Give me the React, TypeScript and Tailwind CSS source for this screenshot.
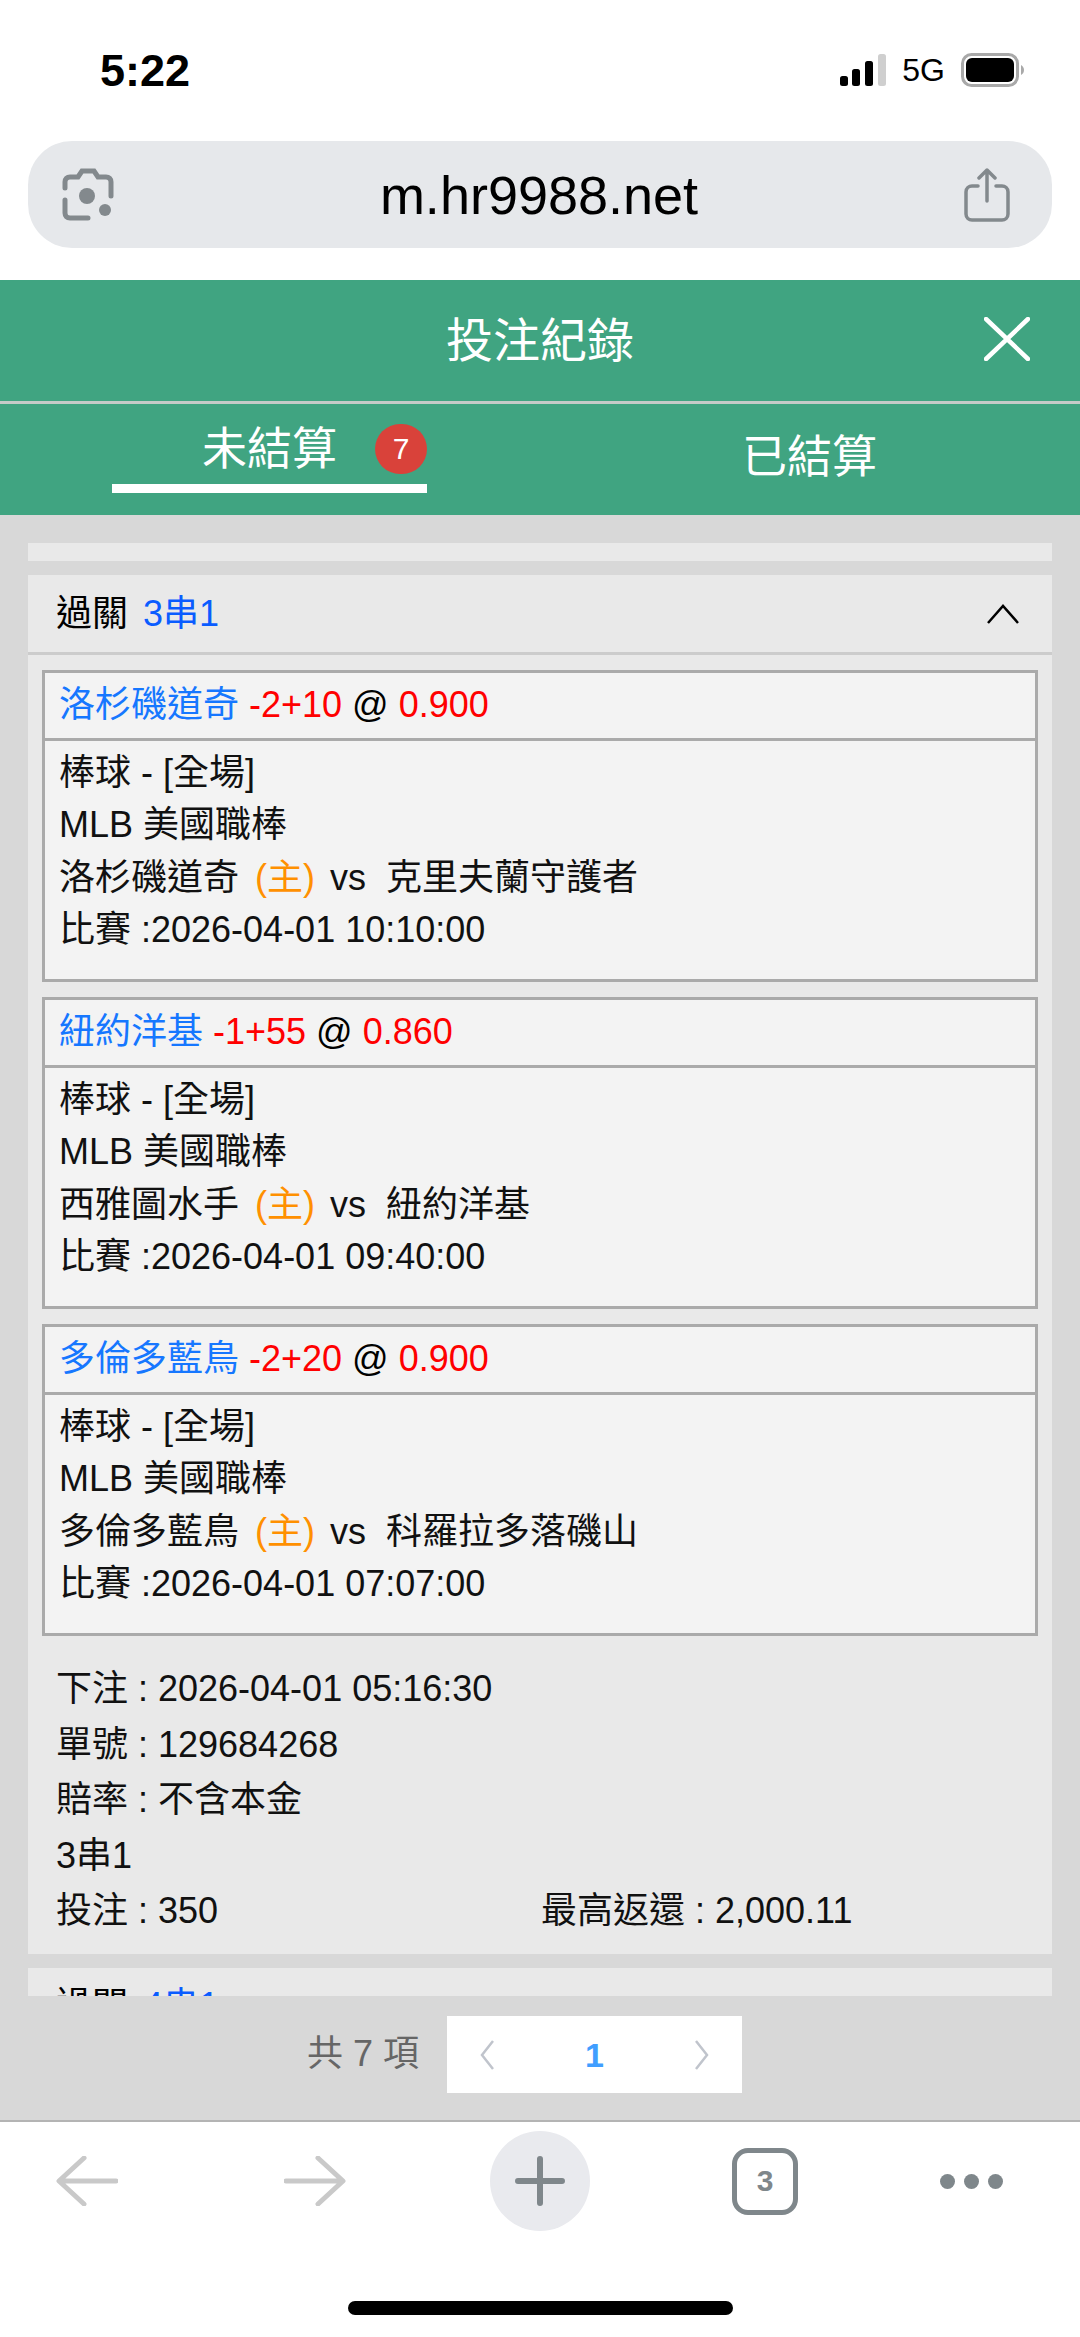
const cjk = { fontFamily: '"Liberation Sans", "Noto Sans CJK TC", sans-serif' };

const tickets = [
  { team: "洛杉磯道奇", line: "-2+10", odds: "0.900", home: "洛杉磯道奇", away: "克里夫蘭守護者", time: "2026-04-01 10:10:00" },
  { team: "紐約洋基", line: "-1+55", odds: "0.860", home: "西雅圖水手", away: "紐約洋基", time: "2026-04-01 09:40:00" },
  { team: "多倫多藍鳥", line: "-2+20", odds: "0.900", home: "多倫多藍鳥", away: "科羅拉多落磯山", time: "2026-04-01 07:07:00" },
];

function StatusBar() {
  return (
    <div className="flex h-[52px] items-center justify-between pl-[100px] pr-[56px]">
      <span className="text-[45px] font-bold leading-none text-black">5:22</span>
      <div className="flex items-center">
        <svg width="46" height="32" viewBox="0 0 46 32">
          <rect x="0" y="22" width="8" height="10" rx="2.5" fill="#000" />
          <rect x="12" y="15" width="8" height="17" rx="2.5" fill="#000" />
          <rect x="25" y="7" width="8" height="25" rx="2.5" fill="#000" />
          <rect x="38" y="0" width="8" height="32" rx="2.5" fill="#cfcfcf" />
        </svg>
        <span className="ml-[16px] text-[32px] leading-none text-black">5G</span>
        <svg className="ml-[16px]" width="63" height="34" viewBox="0 0 63 34">
          <rect x="1.5" y="1.5" width="55" height="31" rx="9" fill="none" stroke="#a9a9a9" strokeWidth="3" />
          <rect x="5" y="5" width="48" height="24" rx="6" fill="#000" />
          <path d="M60 12c2 1 3 3 3 5s-1 4-3 5z" fill="#a9a9a9" />
        </svg>
      </div>
    </div>
  );
}

function UrlBar() {
  return (
    <div className="mx-[28px] mt-[45px] flex h-[107px] items-center justify-between rounded-[44px] bg-[#e6e8eb] pl-[34px] pr-[42px]">
      <svg width="52" height="54" viewBox="0 0 52 54" fill="none" stroke="#83898d" strokeWidth="5" strokeLinecap="round">
        <path d="M3 20v-6c0-3 2-5 5-5h8l4-6h12l4 6h8c3 0 5 2 5 5v14" />
        <path d="M3 32v13c0 3 2 5 5 5h18" />
        <circle cx="25" cy="28" r="8" fill="#83898d" stroke="none" />
        <circle cx="43" cy="42" r="6" fill="#83898d" stroke="none" />
      </svg>
      <span className="text-[54px] leading-none text-black">m.hr9988.net</span>
      <svg width="46" height="54" viewBox="0 0 46 54" fill="none" stroke="#83898d" strokeWidth="3.5" strokeLinecap="round" strokeLinejoin="round">
        <path d="M14 18H8c-3 0-6 2-6 6v22c0 4 3 6 6 6h30c3 0 6-2 6-6V24c0-4-3-6-6-6h-6" />
        <path d="M23 33V2M15 10l8-8 8 8" />
      </svg>
    </div>
  );
}

function Ticket({ t }: { t: (typeof tickets)[number] }) {
  return (
    <div className="h-[312px] border-[3px] border-[#aaaaaa] bg-[#f3f3f3]">
      <div className="flex h-[68px] items-center border-b-[3px] border-[#aaaaaa] px-[14px] pb-[2px] text-[36px] leading-none">
        <span className="text-[#1677ff]">{t.team}</span>
        <span className="ml-[10px] text-[#ff0000]">{t.line}</span>
        <span className="ml-[10px] text-black">@</span>
        <span className="ml-[10px] text-[#ff0000]">{t.odds}</span>
      </div>
      <div className="px-[14px] pt-[6px] text-[36px] leading-[52.4px] text-[#111111]">
        <div>棒球 - [全場]</div>
        <div>MLB 美國職棒</div>
        <div>
          {t.home} <span className="ml-[6px] mr-[5px] text-[#ff9000]">(主)</span> vs&nbsp; {t.away}
        </div>
        <div>比賽 :{t.time}</div>
      </div>
    </div>
  );
}

function BetCard() {
  return (
    <div className="bg-[#e9e9e9]">
      <div className="flex h-[80px] items-center justify-between border-b-[3px] border-[#cccccc] pl-[28px] pr-[33px]">
        <div className="text-[36px] leading-none text-black">
          過關 <span className="ml-[5px] text-[#0a5cff]">3串1</span>
        </div>
        <svg width="32" height="20" viewBox="0 0 32 20" fill="none" stroke="#000" strokeWidth="2.5">
          <path d="M1 19 16 2l15 17" />
        </svg>
      </div>
      <div className="flex flex-col gap-[15px] px-[14px] pt-[15px]">
        {tickets.map((t) => (
          <Ticket key={t.time} t={t} />
        ))}
      </div>
      <div className="px-[28px] pb-[15px] pt-[25px] text-[36px] leading-[55.5px] text-[#111111]">
        <div>下注 : 2026-04-01 05:16:30</div>
        <div>單號 : 129684268</div>
        <div>賠率 : 不含本金</div>
        <div>3串1</div>
        <div className="grid grid-cols-[485px_1fr]">
          <span>投注 : 350</span>
          <span>最高返還 : 2,000.11</span>
        </div>
      </div>
    </div>
  );
}

function BottomBar() {
  return (
    <div className="h-[217px] border-t-[2px] border-[#b4b4b4] bg-white">
      <div className="flex h-[118px] items-center pl-[56px]">
        <svg width="62" height="50" viewBox="0 0 62 50" fill="none" stroke="#c9c9c9" strokeWidth="5" strokeLinecap="round" strokeLinejoin="round">
          <path d="M60 25H4M28 2 3 25l25 23" />
        </svg>
        <svg className="ml-[166px]" width="62" height="50" viewBox="0 0 62 50" fill="none" stroke="#c9c9c9" strokeWidth="5" strokeLinecap="round" strokeLinejoin="round">
          <path d="M2 25h56M34 2l25 23-25 23" />
        </svg>
        <div className="ml-[144px] flex h-[100px] w-[100px] items-center justify-center rounded-full bg-[#e9eaee]">
          <svg width="50" height="50" viewBox="0 0 50 50" stroke="#7f878b" strokeWidth="6" strokeLinecap="round">
            <path d="M25 3v44M3 25h44" />
          </svg>
        </div>
        <div className="ml-[142px] flex h-[67px] w-[66px] items-center justify-center rounded-[16px] border-[5px] border-[#7f878b] text-[30px] font-bold leading-none text-[#7f878b]">
          3
        </div>
        <div className="ml-[142px] flex gap-[9px]">
          <span className="h-[15px] w-[15px] rounded-full bg-[#7f878b]" />
          <span className="h-[15px] w-[15px] rounded-full bg-[#7f878b]" />
          <span className="h-[15px] w-[15px] rounded-full bg-[#7f878b]" />
        </div>
      </div>
      <div className="mx-auto mt-[61px] h-[14px] w-[385px] rounded-full bg-black" />
    </div>
  );
}

export default function App() {
  return (
    <div className="flex h-[2337px] w-[1080px] flex-col overflow-hidden bg-white" style={cjk}>
      <div className="h-[280px] pt-[44px]">
        <StatusBar />
        <UrlBar />
      </div>

      <div className="bg-[#40a481] text-white">
        <div className="relative flex h-[124px] items-center justify-center border-b-[3px] border-[#c5cbc8]">
          <span className="text-[47px] leading-none">投注紀錄</span>
          <svg className="absolute right-[50px] top-[37px]" width="46" height="44" viewBox="0 0 46 44" stroke="#fff" strokeWidth="4.5" strokeLinecap="round">
            <path d="M2 2l42 40M44 2 2 42" />
          </svg>
        </div>
        <div className="flex h-[111px]">
          <div className="relative ml-[112px] h-[89px] w-[315px] border-b-[9px] border-white pt-[23px] text-center">
            <span className="text-[45px] leading-[46px]">未結算</span>
            <span className="absolute right-0 top-[20px] flex h-[50px] w-[52px] items-center justify-center rounded-full bg-[#d9423a] text-[30px] leading-none">
              7
            </span>
          </div>
          <div className="ml-[315px] pt-[31px] text-[45px] leading-[46px]">已結算</div>
        </div>
      </div>

      <div className="h-[1481px] overflow-hidden bg-[#d8d8d8] px-[28px] pt-[28px]">
        <div className="mb-[14px] h-[18px] bg-[#e9e9e9]" />
        <BetCard />
        <div className="mt-[14px] h-[80px] bg-[#e9e9e9]">
          <div className="flex items-center justify-between pl-[28px] pr-[33px] pt-[20px] text-[36px] leading-none text-black">
            <div>
              過關 <span className="ml-[5px] text-[#0a5cff]">4串1</span>
            </div>
            <svg width="32" height="20" viewBox="0 0 32 20" fill="none" stroke="#000" strokeWidth="2.5">
              <path d="M1 1 16 18 31 1" />
            </svg>
          </div>
        </div>
      </div>

      <div className="flex h-[124px] items-start bg-[#d8d8d8] pl-[307px] pt-[20px]">
        <span className="mr-[28px] mt-[18px] text-[36px] leading-[40px] text-[#666666]">共 7 項</span>
        <div className="flex h-[77px] w-[295px] items-center justify-between bg-white px-[32px]">
          <svg width="16" height="32" viewBox="0 0 16 32" fill="none" stroke="#c0c4cc" strokeWidth="2.5">
            <path d="M14 2 3 16l11 14" />
          </svg>
          <span className="text-[34px] font-bold leading-none text-[#409eff]">1</span>
          <svg width="16" height="32" viewBox="0 0 16 32" fill="none" stroke="#c0c4cc" strokeWidth="2.5">
            <path d="M2 2l11 14L2 30" />
          </svg>
        </div>
      </div>

      <BottomBar />
    </div>
  );
}
